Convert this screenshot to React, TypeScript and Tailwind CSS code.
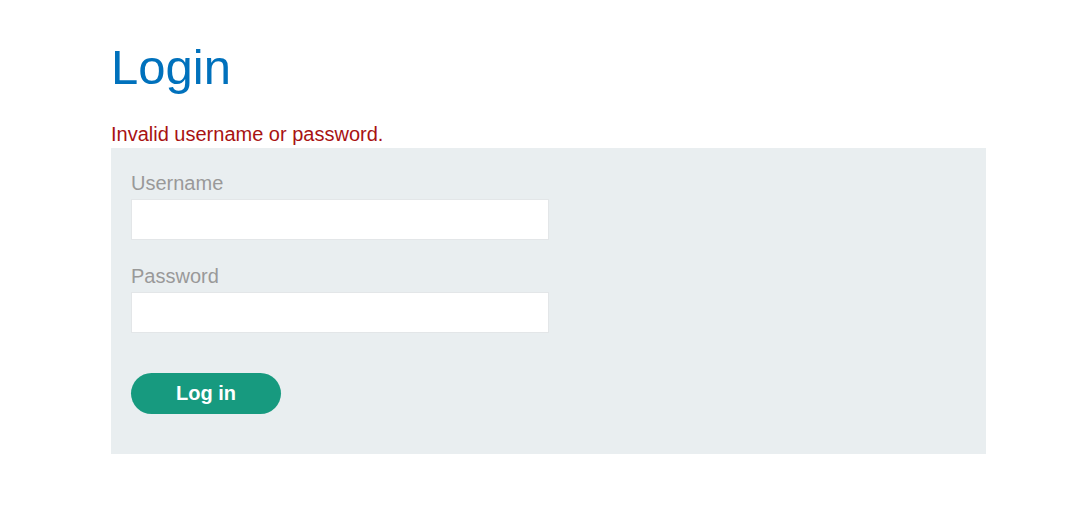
import React from "react";

export default function App() {
  return (
    <div
      className="min-h-[510px] w-full bg-white"
      style={{ fontFamily: '"Liberation Sans", Arial, sans-serif' }}
    >
      <div className="ml-[111px] w-[875px] pt-[40px]">
        <h1 className="m-0 text-[49px] leading-[55px] font-normal text-[#0071bc]">Login</h1>
        <p className="mt-[28px] text-[20px] leading-[23px] text-[#a81212]">
          Invalid username or password.
        </p>
        <form
          className="mt-[2px] flex flex-col bg-[#e9eef0] px-[20px] pt-[24px] pb-[40px]"
          onSubmit={(e) => e.preventDefault()}
        >
          <label className="mb-[4px] text-[20px] leading-[23px] text-[#999999]">Username</label>
          <input
            type="text"
            className="h-[41px] w-[418px] border border-[#e3e6e8] bg-white outline-none"
          />
          <label className="mt-[25px] mb-[4px] text-[20px] leading-[23px] text-[#999999]">Password</label>
          <input
            type="password"
            className="h-[41px] w-[418px] border border-[#e3e6e8] bg-white outline-none"
          />
          <button
            type="submit"
            className="mt-[40px] h-[41px] w-[150px] rounded-full bg-[#179a7f] pb-[2px] text-[20px] font-bold text-white"
          >
            Log in
          </button>
        </form>
      </div>
    </div>
  );
}
